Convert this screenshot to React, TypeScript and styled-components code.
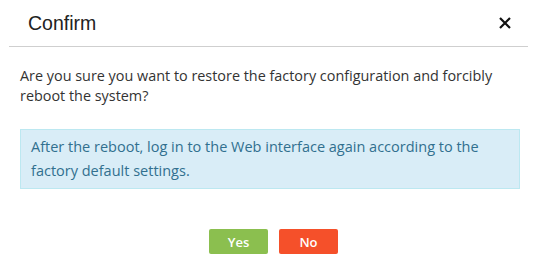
import styled, { createGlobalStyle } from 'styled-components'

const GlobalStyle = createGlobalStyle`
  html, body {
    margin: 0;
    padding: 0;
    background: #fff;
  }
  body {
    font-family: "Open Sans", "Noto Sans", sans-serif;
  }
`

const Dialog = styled.div`
  width: 541px;
  height: 264px;
  background: #fff;
  box-sizing: border-box;
`

const Header = styled.div`
  display: flex;
  align-items: center;
  justify-content: space-between;
  height: 47px;
  margin: 0 13px 0 9px;
  padding: 0 16px 0 19px;
  border-bottom: 1px solid #cfcfcf;
  box-sizing: border-box;
`

const Title = styled.h4`
  margin: 0;
  font-family: "Liberation Sans", Arial, sans-serif;
  font-size: 19.5px;
  font-weight: normal;
  color: #222;
`

const CloseButton = styled.button`
  border: 0;
  background: none;
  padding: 0;
  width: 14px;
  height: 14px;
  cursor: pointer;
  display: flex;
`

const Body = styled.div`
  padding: 19px 21px 0 20px;
`

const Message = styled.p`
  margin: 0;
  font-size: 14.4px;
  line-height: 20px;
  color: #333;
`

const InfoBox = styled.div`
  margin-top: 23px;
  padding: 5px 10px;
  background: #d9edf7;
  border: 1px solid #bce8f1;
  color: #31708f;
  font-size: 14.5px;
  line-height: 24px;
`

const Footer = styled.div`
  display: flex;
  justify-content: center;
  gap: 11px;
  margin-top: 40px;
  padding-left: 7px;
`

const Button = styled.button<{ $tone: 'yes' | 'no' }>`
  width: 59px;
  height: 25px;
  border: 0;
  border-radius: 2px;
  font-family: inherit;
  font-size: 13px;
  font-weight: 600;
  color: #fff;
  background: ${p => (p.$tone === 'yes' ? '#8bbf4f' : '#f5502a')};
  cursor: pointer;
`

const App = () => {
  return (
    <Dialog>
      <GlobalStyle />
      <Header>
        <Title>Confirm</Title>
        <CloseButton aria-label="close">
          <svg width="14" height="14" viewBox="0 0 14 14">
            <path d="M2 2 L12 12 M12 2 L2 12" stroke="#111" strokeWidth="2.2" />
          </svg>
        </CloseButton>
      </Header>
      <Body>
        <Message>
          Are you sure you want to restore the factory configuration and forcibly
          reboot the system?
        </Message>
        <InfoBox>
          After the reboot, log in to the Web interface again according to the
          factory default settings.
        </InfoBox>
        <Footer>
          <Button $tone="yes">Yes</Button>
          <Button $tone="no">No</Button>
        </Footer>
      </Body>
    </Dialog>
  )
}

export default App
